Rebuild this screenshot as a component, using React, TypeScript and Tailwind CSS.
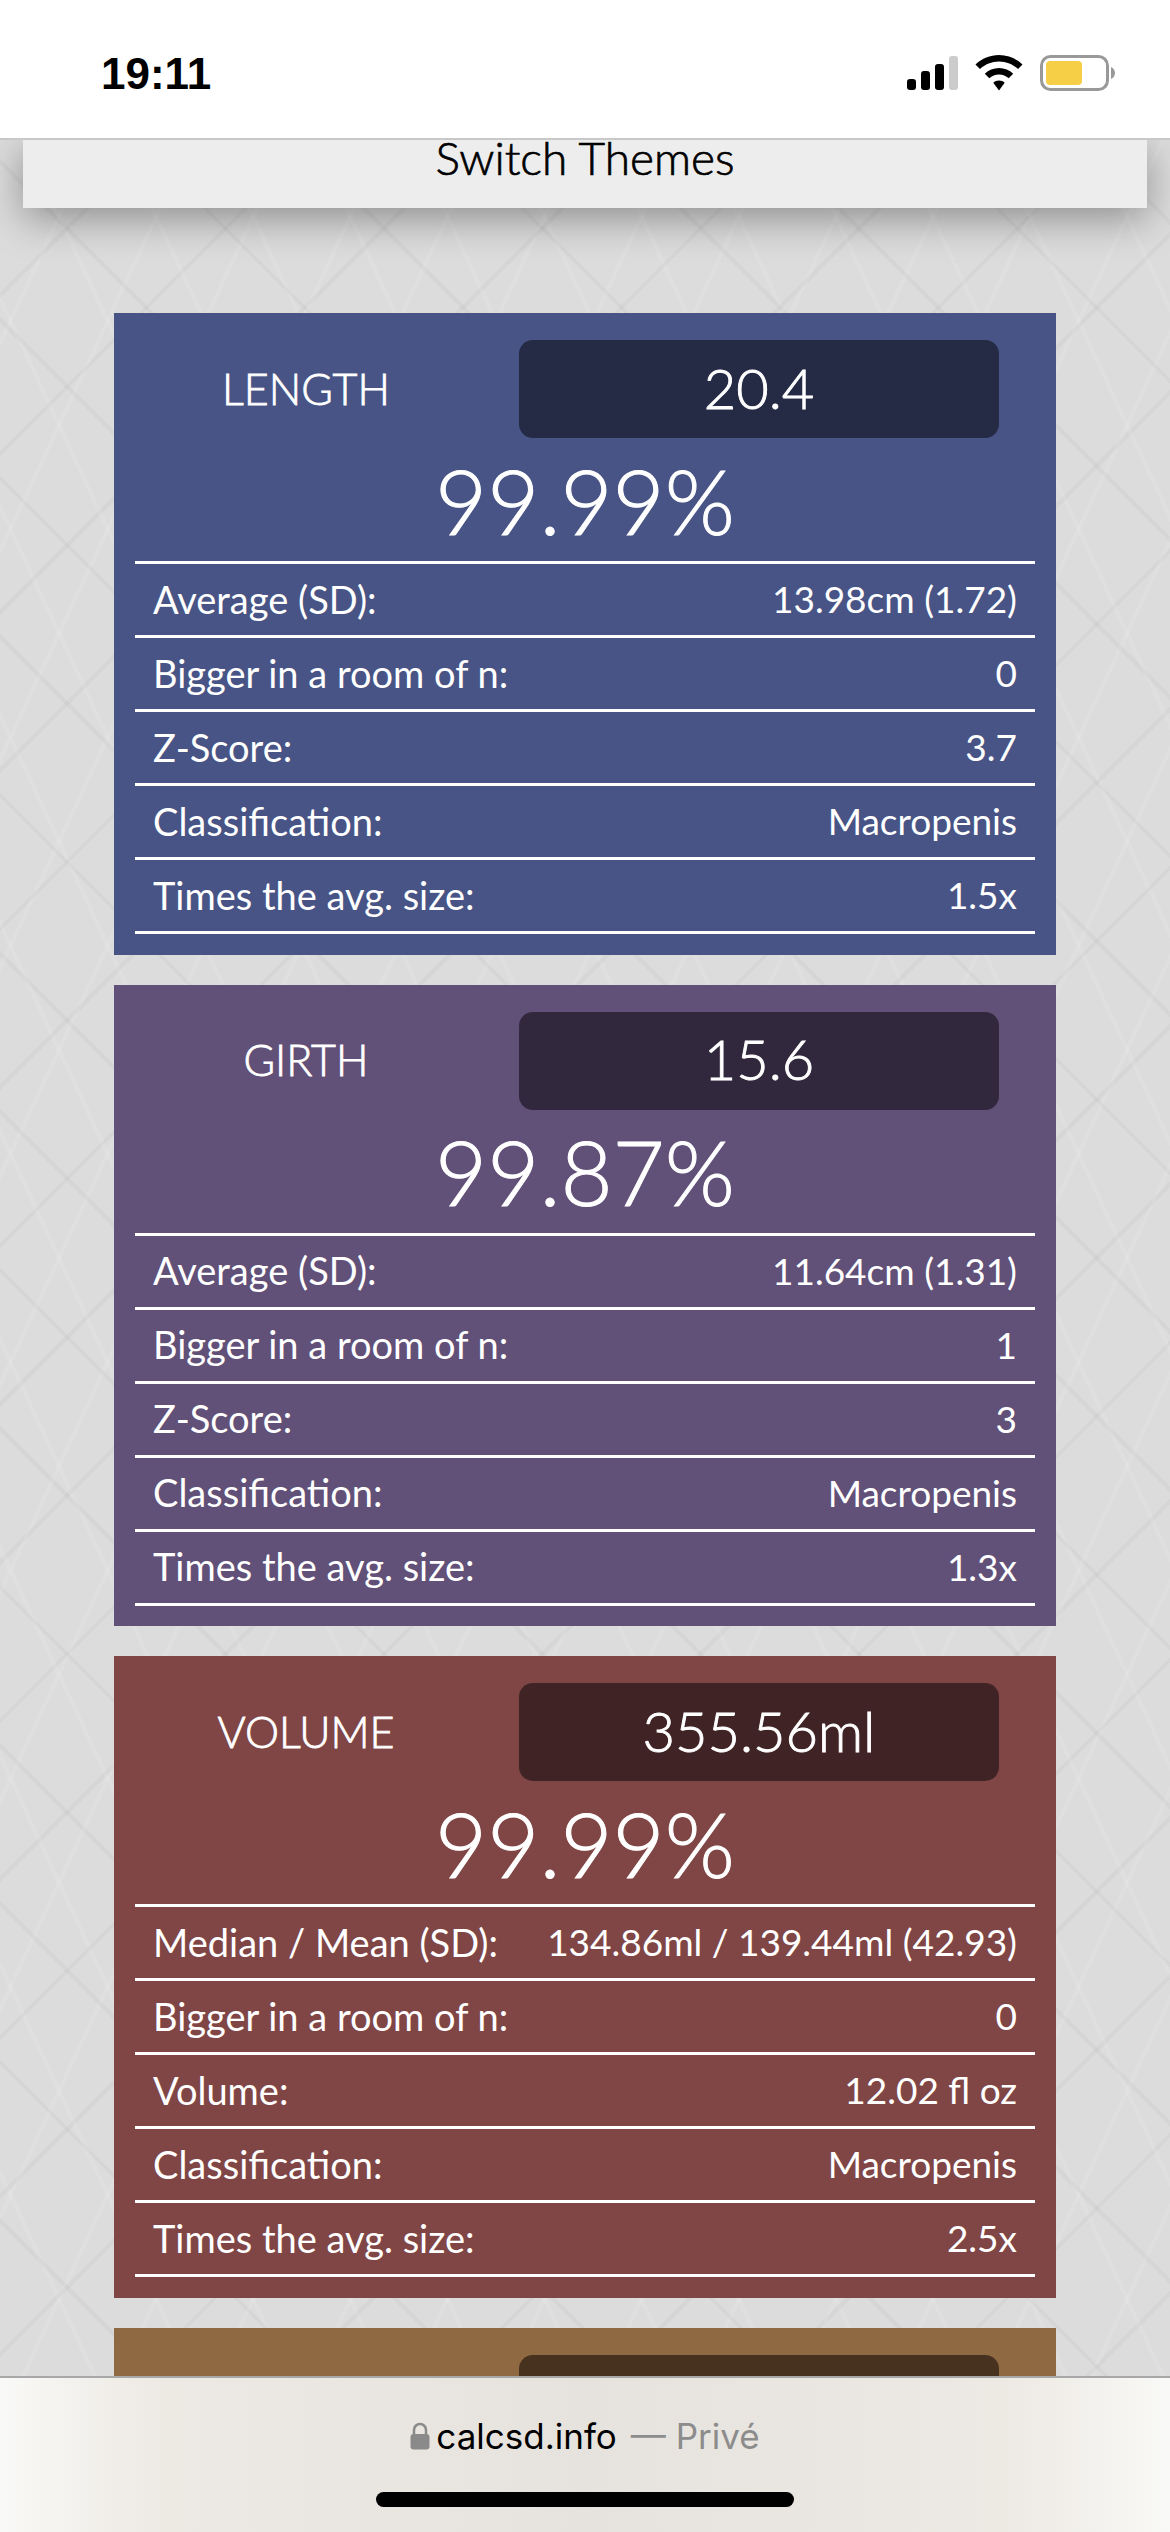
import React from 'react';

const CARDS = [
  {
    label: 'LENGTH', value: '20.4', pct: '99.99%', bg: 'bg-[#475485]', box: 'bg-[#252a45]',
    rows: [['Average (SD):', '13.98cm (1.72)'], ['Bigger in a room of n:', '0'], ['Z-Score:', '3.7'], ['Classification:', 'Macropenis'], ['Times the avg. size:', '1.5x']],
  },
  {
    label: 'GIRTH', value: '15.6', pct: '99.87%', bg: 'bg-[#615078]', box: 'bg-[#32283d]',
    rows: [['Average (SD):', '11.64cm (1.31)'], ['Bigger in a room of n:', '1'], ['Z-Score:', '3'], ['Classification:', 'Macropenis'], ['Times the avg. size:', '1.3x']],
  },
  {
    label: 'VOLUME', value: '355.56ml', pct: '99.99%', bg: 'bg-[#804646]', box: 'bg-[#402324]',
    rows: [['Median / Mean (SD):', '134.86ml / 139.44ml (42.93)'], ['Bigger in a room of n:', '0'], ['Volume:', '12.02 fl oz'], ['Classification:', 'Macropenis'], ['Times the avg. size:', '2.5x']],
  },
];

const Card = ({ card }: { card: typeof CARDS[number] }) => (
  <div className={`${card.bg} h-[641.5px] px-[21px] pt-[27px] text-white shrink-0`}>
    <div className="flex items-center">
      <div className="w-[342px] mr-[42px] text-center text-[43px] font-light [-webkit-text-stroke:0.8px_white]">{card.label}</div>
      <div className={`${card.box} w-[480px] h-[98px] rounded-[14px] flex items-center justify-center text-[56px] font-light [-webkit-text-stroke:0.9px_white] pb-[3px]`}>{card.value}</div>
    </div>
    <div className="h-[123px] flex items-center justify-center text-[90px] font-light [-webkit-text-stroke:1px_white] leading-none">{card.pct}</div>
    <div className="border-t-[3px] border-white">
      {card.rows.map(([k, v]) => (
        <div key={k} className="h-[74px] border-b-[3px] border-white flex items-center justify-between px-[18px] pb-[1px] font-normal">
          <span className="text-[38px]">{k}</span>
          <span className="text-[37px]">{v}</span>
        </div>
      ))}
    </div>
  </div>
);

export default function App() {
  return (
    <div className="w-[1170px] h-[2532px] flex flex-col overflow-hidden font-['Lato',sans-serif]">
      {/* status bar */}
      <div className="h-[140px] shrink-0 bg-white border-b-2 border-[#c8c8c8] flex items-start justify-between pt-[48px] pl-[101px] pr-[55px] relative z-10">
        <span className="font-['Liberation_Sans',sans-serif] font-bold text-[44px] leading-[52px] text-black">19:11</span>
        <div className="flex items-center gap-[17px] pt-[7px]">
          <svg width="51" height="34" viewBox="0 0 51 34">
            <rect x="0" y="23" width="9" height="11" rx="3" fill="#000" />
            <rect x="14" y="15" width="9" height="19" rx="3" fill="#000" />
            <rect x="28" y="8" width="9" height="26" rx="3" fill="#000" />
            <rect x="42" y="0" width="9" height="34" rx="3" fill="#ccc" />
          </svg>
          <svg width="48" height="36" viewBox="0 0 48 36">
            <path d="M24 0C15 0 7 3.400 0.500 9.500L5 14C10 9.400 16.700 6.500 24 6.500S38 9.400 43 14L47.500 9.500C41 3.400 33 0 24 0Z" fill="#000" />
            <path d="M24 13C18.500 13 13.500 15.200 9.800 18.800L14.300 23.300C16.900 20.900 20.300 19.400 24 19.400S31.100 20.900 33.700 23.300L38.200 18.800C34.500 15.200 29.500 13 24 13Z" fill="#000" />
            <path d="M24 25.500C21.800 25.500 19.800 26.300 18.300 27.700L24 35.500L29.700 27.700C28.200 26.300 26.200 25.500 24 25.500Z" fill="#000" />
          </svg>
          <svg width="75" height="36" viewBox="0 0 75 36">
            <rect x="1.500" y="1.500" width="66" height="33" rx="9" fill="none" stroke="#999" strokeWidth="3" />
            <rect x="6" y="6" width="36" height="24" rx="4" fill="#f6cf47" />
            <path d="M71 12C73.500 13 75 15.500 75 18S73.500 23 71 24Z" fill="#999" />
          </svg>
        </div>
      </div>

      {/* page */}
      <div className="flex-1 min-h-0 overflow-hidden relative bg-[#dcdcdc] bg-[repeating-linear-gradient(45deg,transparent_0,transparent_108px,rgba(0,0,0,0.028)_108px,rgba(0,0,0,0.028)_112px),repeating-linear-gradient(135deg,transparent_0,transparent_108px,rgba(0,0,0,0.028)_108px,rgba(0,0,0,0.028)_112px),repeating-linear-gradient(65deg,transparent_0,transparent_84px,rgba(255,255,255,0.09)_84px,rgba(255,255,255,0.09)_88px),repeating-linear-gradient(115deg,transparent_0,transparent_84px,rgba(255,255,255,0.09)_84px,rgba(255,255,255,0.09)_88px)]">
        <div className="mx-[23px] h-[68px] bg-[#ededed] shadow-[0_10px_40px_rgba(0,0,0,0.36)] text-black text-[46px] font-light [-webkit-text-stroke:0.7px_black] leading-[36px] text-center">Switch Themes</div>
        <div className="mt-[105px] mx-[114px] flex flex-col gap-[30px]">
          {CARDS.map((c) => <Card key={c.label} card={c} />)}
          <div className="bg-[#8e6941] h-[300px] pt-[27px] pl-[405px] shrink-0">
            <div className="bg-[#47321f] w-[480px] h-[98px] rounded-[14px]" />
          </div>
        </div>
      </div>

      {/* safari bar */}
      <div className="h-[156px] shrink-0 border-t-2 border-[#a8a8a8] bg-[linear-gradient(90deg,#f9f9f7_0%,#ede9e3_14%,#e6e3de_50%,#ede9e3_86%,#f9f9f7_100%)] flex flex-col items-center relative z-10">
        <div className="flex items-center mt-[38px] h-[40px] text-[35px] leading-[40px] font-['Inter',sans-serif]">
          <svg width="20" height="28" viewBox="0 0 20 28" className="mr-[6px]">
            <path d="M4 13V8a6 6 0 0 1 12 0v5" fill="none" stroke="#8a8a8a" strokeWidth="2.500" />
            <rect x="0.500" y="12" width="19" height="15.500" rx="3" fill="#8a8a8a" />
          </svg>
          <span className="text-black">calcsd.info</span>
          <span className="text-[#8c8c8c] ml-[14px]">— Privé</span>
        </div>
        <div className="mt-[36px] w-[418px] h-[15px] rounded-full bg-black" />
      </div>
    </div>
  );
}
